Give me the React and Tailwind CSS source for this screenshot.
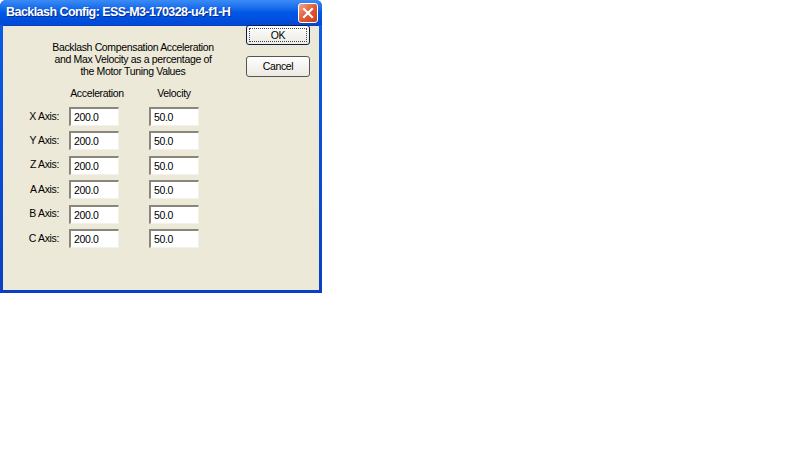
import React from "react";

const rows = ["X", "Y", "Z", "A", "B", "C"];

const Field = ({ value }) => (
    <div className="w-[50px] h-[19px] bg-white border-t-2 border-l-2 border-t-[#8a877a] border-l-[#8a877a] border-b border-r border-b-[#f4f2e8] border-r-[#f4f2e8] pl-[3px] leading-[16px]">
        {value}
    </div>
);

const App = () => {
    return (
        <div className="w-[800px] h-[450px] bg-white font-['Liberation_Sans',Arial,sans-serif] text-[10.5px] tracking-[-0.35px] text-black">
            <div className="w-[322px] h-[293px] flex flex-col bg-gradient-to-b from-[#0a5ee8] to-[#0a3fc4] rounded-t-[6px] overflow-hidden">
                {/* title bar */}
                <div className="h-[25px] flex items-center justify-between pl-[6px] pr-[4px] bg-gradient-to-b from-[#3b8cf6] via-[#0058e6] to-[#0148d6]">
                    <span className="text-white font-bold text-[12.5px] tracking-[-0.55px] [text-shadow:1px_1px_0_#0a2a8a]">
                        Backlash Config: ESS-M3-170328-u4-f1-H
                    </span>
                    <div className="w-[20px] h-[20px] rounded-[3px] border border-white bg-gradient-to-br from-[#f0a58a] via-[#e05a33] to-[#c8401c] flex items-center justify-center">
                        <svg width="12" height="12" viewBox="0 0 12 12">
                            <path d="M2 2 L10 10 M10 2 L2 10" stroke="white" strokeWidth="2.2" strokeLinecap="square" />
                        </svg>
                    </div>
                </div>

                {/* body */}
                <div className="flex-1 mx-[3px] mb-[3px] bg-[#ece9d8] border-t border-[#0c3fb8] flex">
                    <div className="w-[243px] flex flex-col">
                        <div className="pt-[15px] pl-[16px] w-[244px] text-center leading-[12px]">
                            <p>Backlash Compensation Acceleration</p>
                            <p>and Max Velocity as a percentage of</p>
                            <p>the Motor Tuning Values</p>
                        </div>
                        <div className="flex mt-[9px] h-[14px] leading-[14px]">
                            <span className="w-[66px]" />
                            <span className="w-[56px] text-center">Acceleration</span>
                            <span className="w-[24px]" />
                            <span className="w-[50px] text-center">Velocity</span>
                        </div>
                        <div className="flex flex-col gap-[5.4px] mt-[7px]">
                            {rows.map((axis) => (
                                <div key={axis} className="flex items-center h-[19px]">
                                    <span className="w-[56px] text-right">{axis} Axis:</span>
                                    <span className="w-[10px]" />
                                    <Field value="200.0" />
                                    <span className="w-[30px]" />
                                    <Field value="50.0" />
                                </div>
                            ))}
                        </div>
                    </div>

                    <div className="flex flex-col">
                        <button className="w-[64px] h-[20px] mt-[-1px] bg-gradient-to-b from-[#fefefe] to-[#ebeae3] border border-[#0f1c4a] rounded-[3px] flex items-center justify-center">
                            <span className="w-[58px] h-[14px] border border-dotted border-[#444] leading-[12px]">OK</span>
                        </button>
                        <button className="w-[64px] h-[21px] mt-[11px] bg-gradient-to-b from-[#fefefe] to-[#ebeae3] border border-[#555] rounded-[3px] leading-[19px]">
                            Cancel
                        </button>
                    </div>
                </div>
            </div>
        </div>
    );
};

export default App;
